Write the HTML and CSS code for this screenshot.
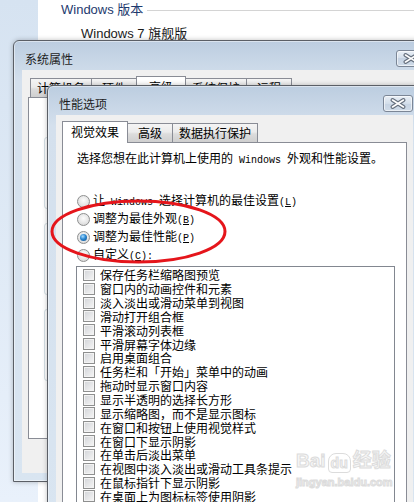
FILE: index.html
```html
<!DOCTYPE html>
<html lang="zh-CN">
<head>
    <meta charset="UTF-8">
    <meta name="viewport" content="width=device-width, initial-scale=1.0">
    <title>性能选项</title>
    <link rel="stylesheet" href="styles.css">
</head>
<body>
    <div class="desktop">
        <div class="sidebar"></div>
        <div class="main">
            <div class="section-head"><span>Windows 版本</span><i class="rule"></i></div>
            <div class="edition">Windows 7 旗舰版</div>
        </div>

        <!-- 系统属性 (behind) -->
        <div class="window sysprops">
            <div class="titlebar">
                <span class="title">系统属性</span>
                <span class="close"><svg width="28" height="15" viewBox="0 0 28 15"><path d="M8.5 4 L19.5 11 M19.5 4 L8.5 11" stroke="#66707e" stroke-width="4" stroke-linecap="round"/><path d="M8.5 4 L19.5 11 M19.5 4 L8.5 11" stroke="#fff" stroke-width="1.6" stroke-linecap="round"/></svg></span>
            </div>
            <div class="client">
                <div class="tabs">
                    <span class="tab">计算机名</span>
                    <span class="tab">硬件</span>
                    <span class="tab active">高级</span>
                    <span class="tab">系统保护</span>
                    <span class="tab">远程</span>
                </div>
                <div class="panel sys-panel">
                    <p class="note">要</p>
                    <div class="group"></div>
                    <div class="group"></div>
                    <div class="group"></div>
                </div>
            </div>
        </div>

        <!-- 性能选项 (front) -->
        <div class="window perf">
            <div class="titlebar">
                <span class="title">性能选项</span>
                <span class="close"><svg width="28" height="15" viewBox="0 0 28 15"><path d="M8.5 4 L19.5 11 M19.5 4 L8.5 11" stroke="#66707e" stroke-width="4" stroke-linecap="round"/><path d="M8.5 4 L19.5 11 M19.5 4 L8.5 11" stroke="#fff" stroke-width="1.6" stroke-linecap="round"/></svg></span>
            </div>
            <div class="client">
                <div class="tabs">
                    <span class="tab active">视觉效果</span>
                    <span class="tab">高级</span>
                    <span class="tab">数据执行保护</span>
                </div>
                <div class="panel perf-panel">
                    <p class="desc">选择您想在此计算机上使用的<span class="mono"> Windows </span>外观和性能设置。</p>
                    <div class="radios">
                        <div class="radio"><i class="dot"></i><span>让<span class="mono"> Windows </span>选择计算机的最佳设置<span class="mono">(<u>L</u>)</span></span></div>
                        <div class="radio"><i class="dot"></i><span>调整为最佳外观<span class="mono">(<u>B</u>)</span></span></div>
                        <div class="radio"><i class="dot on"></i><span>调整为最佳性能<span class="mono">(<u>P</u>)</span></span></div>
                        <div class="radio"><i class="dot"></i><span>自定义<span class="mono">(<u>C</u>):</span></span></div>
                    </div>
                    <ul class="effects">
                        <li><i class="box"></i>保存任务栏缩略图预览</li>
                        <li><i class="box"></i>窗口内的动画控件和元素</li>
                        <li><i class="box"></i>淡入淡出或滑动菜单到视图</li>
                        <li><i class="box"></i>滑动打开组合框</li>
                        <li><i class="box"></i>平滑滚动列表框</li>
                        <li><i class="box"></i>平滑屏幕字体边缘</li>
                        <li><i class="box"></i>启用桌面组合</li>
                        <li><i class="box"></i>任务栏和「开始」菜单中的动画</li>
                        <li><i class="box"></i>拖动时显示窗口内容</li>
                        <li><i class="box"></i>显示半透明的选择长方形</li>
                        <li><i class="box"></i>显示缩略图，而不是显示图标</li>
                        <li><i class="box"></i>在窗口和按钮上使用视觉样式</li>
                        <li><i class="box"></i>在窗口下显示阴影</li>
                        <li><i class="box"></i>在单击后淡出菜单</li>
                        <li><i class="box"></i>在视图中淡入淡出或滑动工具条提示</li>
                        <li><i class="box"></i>在鼠标指针下显示阴影</li>
                        <li><i class="box"></i>在桌面上为图标标签使用阴影</li>
                    </ul>
                </div>
            </div>
        </div>

        <!-- red hand-drawn mark -->
        <svg class="mark" width="182" height="72" viewBox="0 0 182 72">
            <ellipse cx="90.5" cy="35.5" rx="86.5" ry="30.5" fill="none" stroke="#e5151b" stroke-width="3"/>
        </svg>

        <div class="watermark">
            <div class="wm-logo">Bai<span class="paw">du</span>经验</div>
            <div class="wm-url">jingyan.baidu.com</div>
        </div>
    </div>
</body>
</html>
```

FILE: styles.css
```css
* {
    box-sizing: border-box;
}
body {
    margin: 0;
    font-family: "Noto Sans CJK SC", "Liberation Sans", sans-serif;
    font-size: 12px;
    color: #000;
}
.desktop {
    position: relative;
    width: 414px;
    height: 502px;
    overflow: hidden;
    display: flex;
    background: #fff;
}
.sidebar {
    width: 38px;
    flex: none;
    background: linear-gradient(#d6e3f1, #e9f1fb);
}
.main {
    flex: 1;
    padding: 2px 0 0 23px;
    font-family: "Liberation Sans", "Noto Sans CJK SC", sans-serif;
}
.section-head {
    display: flex;
    align-items: center;
    height: 15px;
    font-size: 13px;
    line-height: 15px;
    color: #1e3a6e;
}
.section-head .rule {
    flex: 1;
    height: 1px;
    margin: 2px 0 0 4px;
    background: #d4d4d4;
}
.edition {
    margin: 9px 0 0 20px;
    font-size: 13px;
    line-height: 16px;
    color: #1a1a1a;
}

/* windows */
.window {
    position: absolute;
    z-index: 1;
    display: flex;
    flex-direction: column;
    padding: 0 8px 8px;
    border: 1px solid #5b5f66;
    border-radius: 6px 6px 0 0;
    background: linear-gradient(#bccde0, #d4e0ed 40px, #d9e5f1);
    box-shadow: inset 0 0 0 1px rgba(255,255,255,0.45), 0 0 5px rgba(0,0,0,0.25);
}
.sysprops {
    left: 13px;
    top: 40px;
    width: 422px;
    height: 442px;
}
.perf {
    left: 47px;
    top: 85px;
    width: 375px;
    height: 440px;
}
.titlebar {
    display: flex;
    align-items: flex-start;
    height: 29px;
    padding: 9px 0 0 3px;
    flex: none;
}
.title {
    margin-top: 2px;
    line-height: 14px;
    color: #1e1e1e;
}
.close {
    margin-left: auto;
    width: 30px;
    height: 17px;
    border: 1px solid #7b8696;
    border-radius: 3px;
    background: linear-gradient(#e9eff6, #d3deea 50%, #c6d3e3 50%, #cfdbe8);
    box-shadow: inset 0 0 0 1px rgba(255,255,255,0.6);
}
.close svg {
    display: block;
}
.client {
    flex: 1;
    display: flex;
    flex-direction: column;
    padding: 6px 6px 34px;
    background: #f0f0f0;
}

/* tabs */
.tabs {
    display: flex;
    align-items: flex-end;
    height: 21px;
    flex: none;
}
.sysprops .tabs {
    padding-left: 2px;
}
.tab {
    min-width: 46px;
    height: 19px;
    padding: 0 6px;
    border: 1px solid #898c95;
    border-bottom: none;
    margin-right: -1px;
    line-height: 18px;
    text-align: center;
    background: linear-gradient(#f4f4f4, #ebebeb 45%, #dcdcdc 55%, #cfcfcf);
}
.tab.active {
    position: relative;
    z-index: 1;
    min-width: 50px;
    height: 22px;
    padding: 0 8px;
    margin-bottom: -1px;
    line-height: 20px;
    background: #fff;
}
.panel {
    flex: 1;
    background: #fff;
    border: 1px solid #898c95;
}
.sys-panel {
    padding: 7px 0 0 15px;
}
.note {
    margin: 0 0 18px 3px;
    line-height: 14px;
    white-space: nowrap;
}
.group {
    height: 72px;
    margin-bottom: 14px;
    border: 1px solid #d5dfe5;
    border-radius: 3px;
}

/* performance options panel */
.perf-panel {
    padding: 8px 11px 0 14px;
}
.desc {
    margin: 0;
    line-height: 14px;
    white-space: nowrap;
}
.mono {
    font-family: "Liberation Mono", monospace;
    font-size: 10px;
}
.radios {
    margin-top: 24px;
}
.radio {
    display: flex;
    align-items: center;
    height: 18px;
    line-height: 14px;
    white-space: nowrap;
}
.dot {
    position: relative;
    flex: none;
    width: 13px;
    height: 13px;
    margin-right: 3px;
    border: 1px solid #8e8f8f;
    border-radius: 50%;
    background: radial-gradient(circle at 50% 40%, #fcfcfc, #e6e6e6 55%, #cdcdcd);
}
.dot.on::after {
    content: "";
    position: absolute;
    left: 2px;
    top: 2px;
    width: 7px;
    height: 7px;
    border-radius: 50%;
    background: radial-gradient(circle at 40% 35%, #a6dcff, #2a86d0 45%, #0c4a86);
}
.effects {
    list-style: none;
    margin: 2px 0 0 -1px;
    padding: 1px 0 0 6px;
    height: 300px;
    border: 1px solid #828790;
}
.effects li {
    display: flex;
    align-items: center;
    height: 13.85px;
    line-height: 13px;
    white-space: nowrap;
}
.box {
    flex: none;
    width: 12px;
    height: 12px;
    margin-right: 5px;
    border: 1px solid #8e8f8f;
    background: linear-gradient(135deg, #d2d4d8, #f6f6f6);
    box-shadow: inset 0 0 0 1px #f3f3f3;
}

/* overlays */
.mark {
    position: absolute;
    z-index: 2;
    left: 48px;
    top: 196px;
}
.watermark {
    position: absolute;
    z-index: 2;
    left: 296px;
    top: 449px;
    font-family: "Liberation Sans", "Noto Sans CJK SC", sans-serif;
    font-weight: bold;
    color: #f6f6f6;
    -webkit-text-stroke: 1px #dcdcdc;
}
.wm-logo {
    display: flex;
    align-items: flex-end;
    font-size: 19px;
    line-height: 24px;
}
.paw {
    margin: 0 2px;
    padding: 0 2px;
    font-size: 14px;
    line-height: 18px;
    border: 1px solid #dcdcdc;
    border-radius: 8px 8px 4px 4px;
}
.wm-url {
    margin-top: 3px;
    font-size: 11px;
    line-height: 12px;
}
```
